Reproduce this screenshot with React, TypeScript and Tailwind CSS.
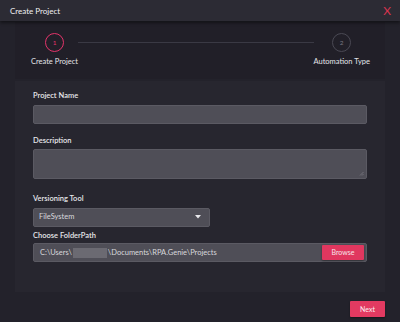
import React from 'react'

const Step = ({ n, label, active }: { n: number; label: string; active?: boolean }) => (
  <div className="flex flex-col items-center">
    <div
      className={`w-[19px] h-[19px] rounded-full border-[1.5px] flex items-center justify-center text-[6.5px] ${
        active ? 'border-[#e3346a] text-[#e3346a]' : 'border-[#4a4954] text-[#7a7984]'
      }`}
    >
      {n}
    </div>
    <div className="mt-[6px] text-[7.5px] text-[#e4e4e8] whitespace-nowrap leading-none">{label}</div>
  </div>
)

const Label = ({ children }: { children: React.ReactNode }) => (
  <div className="text-[7.5px] font-semibold text-[#e8e8ec] leading-none">{children}</div>
)

export default function App() {
  return (
    <div className="w-[400px] h-[322px] bg-[#23222b] flex flex-col overflow-hidden" style={{ fontFamily: 'Lato, "Open Sans", sans-serif' }}>
      {/* Header */}
      <div className="h-[21px] bg-[#2c2b34] px-[10px] flex items-center justify-between shadow-[0_2px_3px_rgba(0,0,0,0.45)] relative z-10">
        <span className="text-[8px] text-[#f0f0f2]">Create Project</span>
        <span className="text-[12px] text-[#d8344f] leading-none mr-[-1px]">X</span>
      </div>

      {/* Stepper */}
      <div className="mx-[15px] mt-[1px] h-[57px] bg-[#211f28] pl-[16px] pr-[15px] pt-[11px] flex items-start">
        <Step n={1} label="Create Project" active />
        <div className="flex-1 h-px bg-[#3a3944] mt-[9px]"></div>
        <Step n={2} label="Automation Type" />
      </div>

      {/* Form */}
      <div className="mx-[15px] mt-[2px] h-[211px] bg-[#27262f] px-[18px] pt-[11px]">
        <Label>Project Name</Label>
        <div className="mt-[5px] h-[19px] bg-[#4f4e57] border border-[#5b5a63] rounded-[2px]"></div>

        <div className="mt-[13px]">
          <Label>Description</Label>
        </div>
        <div className="mt-[5px] h-[30px] bg-[#4f4e57] border border-[#5b5a63] rounded-[2px] relative">
          <svg className="absolute right-[2px] bottom-[2px]" width="5" height="5" viewBox="0 0 5 5">
            <path d="M4.5 1 L1 4.5 M4.5 3 L3 4.5" stroke="#8a8990" strokeWidth="0.6" />
          </svg>
        </div>

        <div className="mt-[16px]">
          <Label>Versioning Tool</Label>
        </div>
        <div className="mt-[5px] w-[177px] h-[19px] bg-[#4f4e57] border border-[#5b5a63] rounded-[2px] flex items-center justify-between pl-[5px] pr-[8px]">
          <span className="text-[7.5px] text-[#d8d8dc]">FileSystem</span>
          <svg width="6" height="4" viewBox="0 0 6 4">
            <path d="M0 0 L6 0 L3 3.5 Z" fill="#e8e8ec" />
          </svg>
        </div>

        <div className="mt-[5px]">
          <Label>Choose FolderPath</Label>
        </div>
        <div className="mt-[4px] h-[19px] bg-[#4f4e57] border border-[#5b5a63] rounded-[2px] flex items-center pl-[6px] pr-[2px]">
          <span className="text-[7.5px] text-[#d8d8dc] flex items-center whitespace-nowrap">
            C:\Users\
            <span className="inline-block w-[34px] h-[10px] bg-[#6b6a72] mx-[1px]"></span>
            \Documents\RPA.Genie\Projects
          </span>
          <div className="ml-auto h-[15px] w-[42px] bg-[#e0375f] rounded-[1px] flex items-center justify-center text-[7px] text-[#f6e3e8] shadow-[0_1px_2px_rgba(0,0,0,0.4)]">
            Browse
          </div>
        </div>
      </div>

      {/* Footer */}
      <div className="flex justify-end pr-[15px] mt-[9px]">
        <div className="h-[16px] w-[35px] bg-[#e23a61] rounded-[1px] flex items-center justify-center text-[7px] text-[#fbeef1] shadow-[0_1px_2px_rgba(0,0,0,0.4)]">
          Next
        </div>
      </div>
    </div>
  )
}
